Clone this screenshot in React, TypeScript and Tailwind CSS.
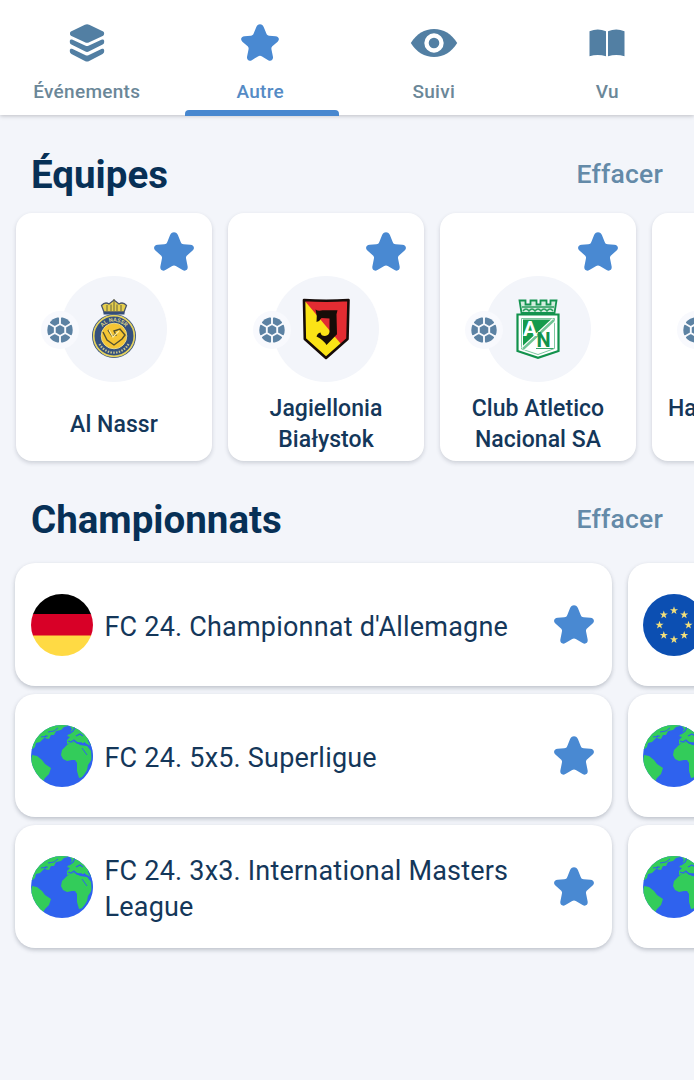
import React from 'react';

interface Team {
  lines: string[];
  badge: 'nassr' | 'jagiellonia' | 'nacional' | 'none';
}

interface Championship {
  name: string;
  icon: 'germany' | 'globe' | 'europe';
}

const teams: Team[] = [
  { lines: ['Al Nassr'], badge: 'nassr' },
  { lines: ['Jagiellonia', 'Białystok'], badge: 'jagiellonia' },
  { lines: ['Club Atletico', 'Nacional SA'], badge: 'nacional' },
];

const championships: Championship[] = [
  { name: "FC 24. Championnat d'Allemagne", icon: 'germany' },
  { name: 'FC 24. 5x5. Superligue', icon: 'globe' },
  { name: 'FC 24. 3x3. International Masters League', icon: 'globe' },
];

const nextIcons: Championship['icon'][] = ['europe', 'globe', 'globe'];

const StarIcon: React.FC<{ className?: string }> = ({ className }) => (
  <svg viewBox="0 0 40 39" fill="currentColor" className={className}>
    <path d="M20 .3c1.9 0 3.2 1.1 4 3l2.7 6.8c.6 1.5 1.4 2.1 3 2.200l6.600.5c3.500.3 4.900 3.400 2.300 5.800l-5.300 4.700c-1.200 1.100-1.500 2-1.200 3.500l1.500 7.400c.7 3.600-2 5.400-5 3.900l-6.400-3.900c-1.600-.9-2.800-.9-4.400 0l-6.400 3.900c-3 1.500-5.700-.3-5-3.900l1.500-7.400c.3-1.500 0-2.400-1.200-3.500l-5.300-4.700c-2.600-2.400-1.200-5.500 2.300-5.800l6.600-.5c1.600-.1 2.400-.7 3-2.200L16 3.300c.8-1.900 2.100-3 4-3z" />
  </svg>
);

const LayersIcon = () => (
  <svg viewBox="0 0 36 38" fill="currentColor" className="h-[38px] w-9">
    <path d="M15.900.8c1.500-.7 2.800-.7 4.300 0l14 6.700c1.300.7 1.300 3.500 0 4.200l-14 6.500c-1.500.7-2.800.7-4.300 0l-14-6.500c-1.300-.7-1.300-3.500 0-4.200z" />
    <path d="M.8 17.200c0-1.700 1.300-2.200 2.800-1.500l13 6c1 .4 1.900.4 2.800 0l13-6c1.500-.7 2.800-.2 2.800 1.500 0 1.900-.4 2.700-1.600 3.300l-13.400 6.800c-1.500.8-2.800.8-4.300 0L2.400 20.500C1.200 19.900.8 19.100.8 17.200z" />
    <path d="M.8 26.600c0-1.700 1.300-2.200 2.800-1.500l13 6.200c1 .4 1.900.4 2.800 0l13-6.200c1.500-.7 2.800-.2 2.800 1.500 0 1.900-.4 2.700-1.600 3.300l-13.400 7.100c-1.500.8-2.800.8-4.300 0L2.400 29.900C1.200 29.300.8 28.500.8 26.600z" />
  </svg>
);

const EyeIcon = () => (
  <svg viewBox="0 0 48 30" className="h-[30px] w-12">
    <path d="M.8 15C6.500 5.700 14.500 1 24 1s17.500 4.700 23.200 14C41.500 24.300 33.500 29 24 29S6.500 24.300.8 15z" fill="currentColor" />
    <circle cx="24" cy="15" r="7.500" fill="currentColor" stroke="#fff" strokeWidth="4.400" />
  </svg>
);

const BookIcon = () => (
  <svg viewBox="0 0 36 28" fill="currentColor" className="h-7 w-9">
    <path d="M.5 2.200C6 0 11.500 0 17 2.200V27.300c-5.500-1.900-11-1.900-16.500 0zM19 2.200C24.500 0 30 0 35.500 2.200V27.300c-5.500-1.900-11-1.900-16.500 0z" />
  </svg>
);

const BallIcon = () => (
  <svg viewBox="0 0 40 40" className="absolute left-[24px] top-[97px] size-10">
    <circle cx="20" cy="20" r="19" fill="#f8f9fd" />
    <circle cx="20" cy="20" r="12.700" fill="#5c82a3" />
    <path
      d="M20 14l5.200 3v6L20 26l-5.200-3v-6zM20 14V6M25.200 17l6.900-4M25.200 23l6.900 4M20 26v8M14.800 23l-6.900 4M14.800 17l-6.900-4"
      fill="none"
      stroke="#f7f9fd"
      strokeWidth="1.900"
    />
    <path d="M18 6.500h4l-2 3zM30.600 11l2.100 3.500-3.500.2zM30.600 29l2.100-3.500-3.500-.2zM18 33.500h4l-2-3zM9.400 29l-2.100-3.500 3.500-.2zM9.400 11l-2.100 3.500 3.500.2z" fill="#f7f9fd" />
  </svg>
);

const NassrBadge = () => (
  <svg viewBox="0 0 46 60" className="h-[60px] w-[46px]">
    <path d="M13 13 10.500 6.500Q14 2.500 18 5l5-4 5 4q4-2.500 7.500 1.500L33 13z" fill="#e6cf4c" stroke="#49546a" strokeWidth="1.300" />
    <path d="M16 6v6M20 5.500V12M23 0v12M26 5.500V12M30 6v6" stroke="#66643f" strokeWidth="1" />
    <path d="M12.500 13h21v2.500h-21z" fill="#344d78" />
    <circle cx="23" cy="37" r="22" fill="#34507d" />
    <circle cx="23" cy="37" r="20.300" fill="none" stroke="#e4d260" strokeWidth="1.700" />
    <circle cx="23" cy="37" r="12.800" fill="#f5c534" stroke="#e7d887" strokeWidth="1" />
    <path d="M12 33l4 8 7 5 8-6 3-4-5-6-6 2 2 4-4 1-4-6" fill="none" stroke="#52502f" strokeWidth="1.400" />
    <path d="M18 31l4 7 6-6" fill="none" stroke="#fff0a0" strokeWidth="1.200" />
    <path id="nassr-arc-top" d="M8.600 37a14.400 14.400 0 0 1 28.800 0" fill="none" />
    <text fill="#d9cf86" fontFamily="Roboto, sans-serif" fontSize="5.500" fontWeight="700" textAnchor="middle">
      <textPath href="#nassr-arc-top" startOffset="50%">AL NASSR</textPath>
    </text>
    <path d="M8.500 45a16.500 16.500 0 0 0 29 0" fill="none" stroke="#c8c38b" strokeWidth="2.200" strokeDasharray="1.500 1.300" />
  </svg>
);

const JagielloniaBadge = () => (
  <svg viewBox="0 0 48 62" className="h-[62px] w-12">
    <path d="M2 2h44.500l-1 39L24 60 2.800 41z" fill="#e32c32" />
    <path d="M2 2l37 44L24 60 2.800 41z" fill="#fbe316" />
    <path d="M13.500 11.500q3 2 7 .8h15l-1 4 .5 20L24.500 47q-3-5-10-8.500 1-3.500 4-4 .5 3.500 4.500 3.500 4-.5 4.500-4V20.500l-8-.5q-1.500 3-5 4 1-6-1-12.500z" fill="#160d08" />
    <path d="M2 2q22 1.500 44.500 0l-1 39L24 60 2.800 41z" fill="none" stroke="#160b08" strokeWidth="2.600" strokeLinejoin="round" />
  </svg>
);

const NacionalBadge = () => (
  <svg viewBox="0 0 44 60" className="h-[60px] w-11">
    <path d="M5.500 14 3.500 1.500h6v4h5v-4h6v4h4v-4h6v4h4v-4h6L38.500 14z" fill="#d3eddd" stroke="#159451" strokeWidth="1.800" />
    <path d="M6 8h32M7 12q3-4 6 0 3-4 6 0 3-4 6 0 3-4 6 0 3-4 6 0" fill="none" stroke="#279c5c" strokeWidth="1.400" />
    <path d="M1.500 15.500h41v36.500L22 58.800 1.500 52z" fill="#fff" stroke="#12924c" strokeWidth="2.200" />
    <path d="M5.500 19.500h33v30L22 55.500 5.500 50z" fill="#fff" stroke="#5cb987" strokeWidth=".8" />
    <path d="M7 20.500h30L7 48z" fill="#159b4c" />
    <path d="M38 21 7 50" stroke="#fff" strokeWidth="5" />
    <path d="M38 21 7 50" stroke="#71c495" strokeWidth="2.400" />
    <path d="M20 49.500h17.500" stroke="#3aa46b" strokeWidth="1" />
    <text x="7" y="37" fill="#fff" fontFamily="Roboto, sans-serif" fontSize="21" fontWeight="700">A</text>
    <text x="20.500" y="48" fill="#12924c" fontFamily="Roboto, sans-serif" fontSize="20" fontWeight="700">N</text>
  </svg>
);

const TeamBadge: React.FC<{ badge: Team['badge'] }> = ({ badge }) => {
  switch (badge) {
    case 'nassr':
      return <NassrBadge />;
    case 'jagiellonia':
      return <JagielloniaBadge />;
    case 'nacional':
      return <NacionalBadge />;
    default:
      return null;
  }
};

// [x, y] centres of the stars on the European flag
const euStars = [
  [31, 16.5],
  [41.2, 20.8],
  [45.5, 31],
  [41.2, 41.2],
  [31, 45.5],
  [20.8, 41.2],
  [16.5, 31],
  [20.8, 20.8],
];

const RoundIcon: React.FC<{ icon: Championship['icon'] }> = ({ icon }) => (
  <svg viewBox="0 0 62 62" className="size-[62px] shrink-0 overflow-hidden rounded-full">
    {icon === 'germany' && (
      <>
        <rect width="62" height="21" fill="#000" />
        <rect y="20" width="62" height="22" fill="#d80027" />
        <rect y="41.500" width="62" height="21" fill="#ffda44" />
      </>
    )}
    {icon === 'europe' && (
      <>
        <rect width="62" height="62" fill="#0c4fb2" />
        {euStars.map(([x, y]) => (
          <path
            key={`${x}-${y}`}
            transform={`translate(${x} ${y})`}
            d="M0-4.200 1-1.300H4.100L1.600.5 2.500 3.500 0 1.700-2.500 3.500-1.600.5-4.100-1.300H-1z"
            fill="#f3df7a"
          />
        ))}
      </>
    )}
    {icon === 'globe' && (
      <>
        <rect width="62" height="62" fill="#2f62ee" />
        <g fill="#33cc5a">
          <path d="M0 25l4-3 1-4 4-1 4-4 5 1 2-4 3 0 2-4 5-1 3-3 4-1 1-2H0z" />
          <path d="M38 0l3 4-2 4-3 3 3 1-3 3 0 4 5-1 3-2 5 2 5 0 6 3V0z" />
          <path d="M36 20l-5 5-1 5 2 4 4 2 5-1 3 0 2 3v8l2 7 4-1 4-7 1-5 4-6-1-8-4-5-7-1-5-3-5 1z" />
          <path d="M1 30l5 1 5 4 3 4 6 4-2 6-4 4-3 5-6-3-6-12z" />
        </g>
        <g fill="none" stroke="#2f62ee">
          <path d="M37 16l3 1 3-2 3 3 5 0M38 9l4-3 2-4M45 11l4-2 3 2" strokeWidth="1.300" />
          <path d="M51 23l5 7M53 17l3 4M10 12l7-1M17 7l6-1 4-3M13 15l2-5" strokeWidth="1" />
          <path d="M57 15q5 8 4 18-1 11-10 20" strokeWidth="1.200" />
        </g>
      </>
    )}
  </svg>
);

const SectionHeader: React.FC<{ title: string }> = ({ title }) => (
  <div className="flex h-12 items-center justify-between pl-[31px] pr-[31px]">
    <h2 className="mt-0.5 text-[38.5px] font-bold leading-[48px] text-[#073056]">{title}</h2>
    <button className="text-[26.5px] font-medium leading-[48px] tracking-[0.2px] text-[#648aa8]">Effacer</button>
  </div>
);

const TeamCard: React.FC<{ team: Team }> = ({ team }) => (
  <div className="relative flex h-[248px] w-[196px] shrink-0 flex-col items-center rounded-2xl bg-white pt-[63px] shadow-[0_2px_4px_rgba(50,60,80,0.20)]">
    <StarIcon className="absolute right-[18px] top-[19px] h-[39px] w-10 text-[#4989d2]" />
    <div className="flex size-[106px] shrink-0 items-center justify-center rounded-full bg-[#f3f5fa]">
      <TeamBadge badge={team.badge} />
    </div>
    <BallIcon />
    <div className="mt-[11px] flex h-[62px] flex-col justify-center whitespace-nowrap text-center text-[23px] font-medium leading-[31px] tracking-[0.05px] text-[#14375a]">
      {team.lines.map((line) => (
        <span key={line}>{line}</span>
      ))}
    </div>
  </div>
);

const ChampionshipCard: React.FC<{ item: Championship }> = ({ item }) => (
  <div className="flex h-[123px] w-[597px] shrink-0 items-center rounded-[20px] bg-white pl-[15.5px] pr-[18.5px] shadow-[0_2px_4px_rgba(50,60,80,0.28)]">
    <RoundIcon icon={item.icon} />
    <div className="ml-[12px] mt-1 w-[430px] text-[27px] leading-[36px] tracking-[0.2px] text-[#14375a]">{item.name}</div>
    <StarIcon className="ml-auto h-[39px] w-10 text-[#4989d2]" />
  </div>
);

const tabs = [
  { label: 'Événements', icon: <LayersIcon /> },
  { label: 'Autre', icon: <StarIcon className="h-[37px] w-[38px]" /> },
  { label: 'Suivi', icon: <EyeIcon /> },
  { label: 'Vu', icon: <BookIcon /> },
];

const App: React.FC = () => {
  const activeTab = 'Autre';

  return (
    <div className="h-[1080px] w-[694px] overflow-hidden bg-[#f3f5fa] font-['Roboto',sans-serif]">
      {/* Tabs */}
      <nav className="grid h-[115px] grid-cols-4 bg-white shadow-[0_1px_4px_rgba(50,50,60,0.28)]">
        {tabs.map((tab) => (
          <div
            key={tab.label}
            className={`relative flex flex-col items-center pt-[23px] ${tab.label === activeTab ? 'text-[#4989d2]' : 'text-[#527fa3]'}`}
          >
            <div className="flex h-[39px] items-center">{tab.icon}</div>
            <span className={`mt-[18px] text-[19px] font-medium leading-6 tracking-[0.3px] ${tab.label === activeTab ? 'text-[#558bc5]' : 'text-[#6b8798]'}`}>
              {tab.label}
            </span>
            {tab.label === activeTab && (
              <div className="absolute -bottom-px left-[11px] h-1.5 w-[154px] rounded-t bg-[#4787cf]" />
            )}
          </div>
        ))}
      </nav>

      {/* Teams */}
      <section className="pt-[35px]">
        <SectionHeader title="Équipes" />
        <div className="mt-[15px] flex gap-4 pl-4">
          {teams.map((team) => (
            <TeamCard key={team.badge} team={team} />
          ))}
          <div className="relative h-[248px] w-[196px] shrink-0 rounded-2xl bg-white pl-4 pt-[180px] shadow-[0_2px_4px_rgba(50,60,80,0.20)]">
            <BallIcon />
            <span className="text-[23px] font-medium leading-[31px] tracking-[0.05px] text-[#14375a]">Ha</span>
          </div>
        </div>
      </section>

      {/* Championships */}
      <section className="pt-[34px]">
        <SectionHeader title="Championnats" />
        <div className="mt-5 flex flex-col gap-2">
          {championships.map((item, index) => (
            <div key={item.name} className="flex gap-4 pl-[15px]">
              <ChampionshipCard item={item} />
              <div className="flex h-[123px] w-[597px] shrink-0 items-center rounded-[20px] bg-white pl-[15px] shadow-[0_2px_4px_rgba(50,60,80,0.28)]">
                <RoundIcon icon={nextIcons[index]} />
              </div>
            </div>
          ))}
        </div>
      </section>
    </div>
  );
};

export default App;
